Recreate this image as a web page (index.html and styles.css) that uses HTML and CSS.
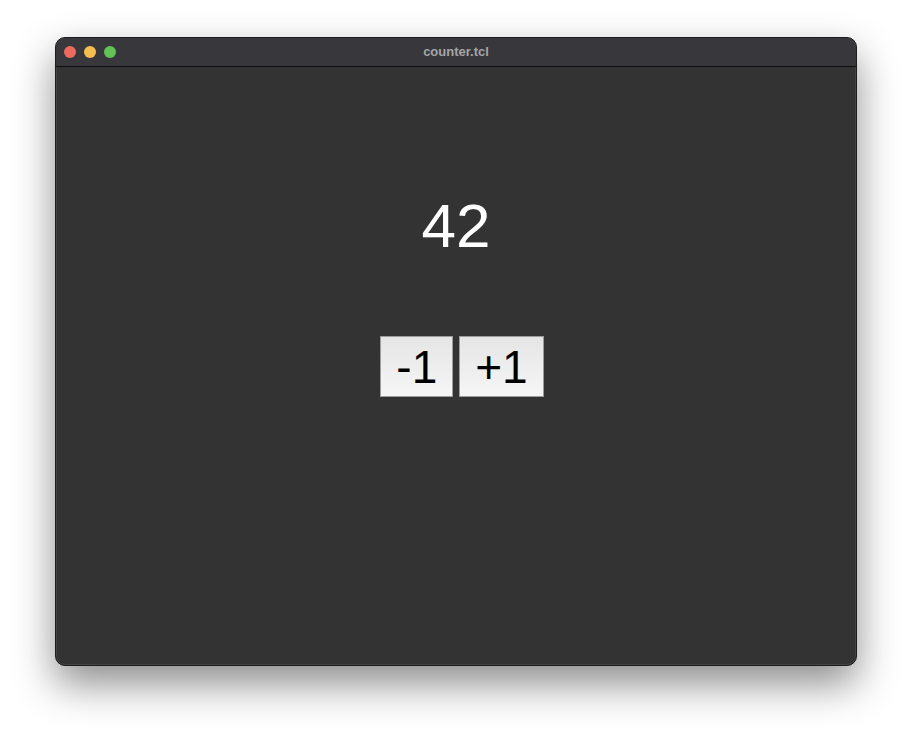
FILE: index.html
```html
<!DOCTYPE html>
<html>
<head>
<meta charset="utf-8">
<link rel="stylesheet" href="styles.css">
</head>
<body>
<div class="window">
  <div class="titlebar">
    <div class="lights">
      <span class="light red"></span>
      <span class="light yellow"></span>
      <span class="light green"></span>
    </div>
    <div class="title">counter.tcl</div>
  </div>
  <div class="content">
    <div class="count">42</div>
    <div class="buttons">
      <button class="btn">-1</button>
      <button class="btn">+1</button>
    </div>
  </div>
</div>
</body>
</html>
```
FILE: styles.css
```css
html, body {
  margin: 0;
  padding: 0;
  background: #ffffff;
  width: 912px;
  height: 740px;
  overflow: hidden;
}
body {
  padding-top: 37px;
  box-sizing: border-box;
}
.window {
  width: 802px;
  height: 629px;
  margin: 0 auto;
  background: #333333;
  border-radius: 10px;
  box-sizing: border-box;
  border: 1px solid #1c1c1c;
  box-shadow: 0 18px 40px rgba(0, 0, 0, 0.45), inset 0 0 0 1px rgba(255,255,255,0.08);
  overflow: hidden;
  display: flex;
  flex-direction: column;
}
.titlebar {
  height: 28px;
  flex: none;
  background: #38373b;
  border-bottom: 1px solid #0f0f0f;
  position: relative;
  display: flex;
  align-items: center;
  justify-content: center;
}
.lights {
  position: absolute;
  left: 8px;
  top: 8px;
  display: flex;
  gap: 8px;
}
.light {
  width: 12px;
  height: 12px;
  border-radius: 50%;
  display: block;
}
.red { background: #ed6a5e; }
.yellow { background: #f5bf4f; }
.green { background: #61c554; }
.title {
  font-family: "Liberation Sans", Arial, sans-serif;
  font-weight: bold;
  font-size: 13px;
  color: #a6a5a8;
  margin-top: -1px;
}
.content {
  flex: 1;
  display: flex;
  flex-direction: column;
  align-items: center;
  padding-top: 128px;
}
.count {
  font-family: "Liberation Sans", Arial, sans-serif;
  font-size: 62px;
  line-height: 62px;
  color: #ffffff;
}
.buttons {
  margin-top: 79px;
  margin-left: 12px;
  display: flex;
  gap: 6px;
}
.btn {
  font-family: "Liberation Sans", Arial, sans-serif;
  font-size: 46px;
  line-height: 46px;
  color: #000000;
  padding: 7px 15px 6px;
  margin: 0;
  border: 1px solid #9c9c9c;
  border-radius: 0;
  background: linear-gradient(#e5e5e5, #f6f6f6);
  height: 61px;
  box-sizing: border-box;
}
```
